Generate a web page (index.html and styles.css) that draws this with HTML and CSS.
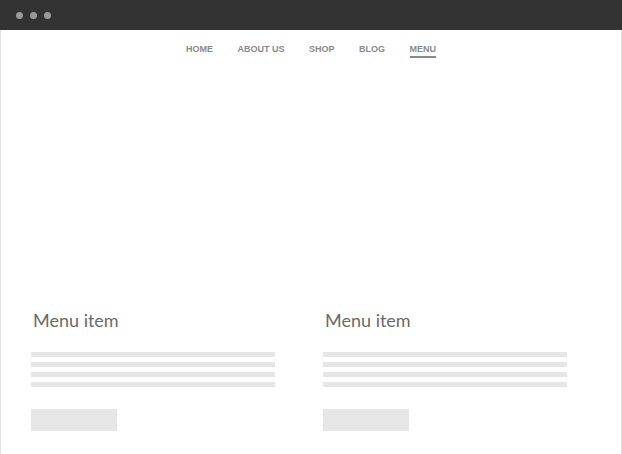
FILE: index.html
```html
<!DOCTYPE html>
<html>
<head>
<meta charset="utf-8">
<link rel="stylesheet" href="styles.css">
</head>
<body>
<div class="window">
  <div class="titlebar">
    <span class="dot"></span><span class="dot"></span><span class="dot"></span>
  </div>
  <div class="page">
    <nav class="nav">
      <a class="nav-link">HOME</a>
      <a class="nav-link">ABOUT US</a>
      <a class="nav-link">SHOP</a>
      <a class="nav-link">BLOG</a>
      <a class="nav-link active">MENU</a>
    </nav>
    <div class="hero"></div>
    <div class="menu">
      <div class="item">
        <h2 class="item-title">Menu item</h2>
        <div class="lines">
          <div class="line"></div><div class="line"></div><div class="line"></div><div class="line"></div>
        </div>
        <div class="button"></div>
      </div>
      <div class="item">
        <h2 class="item-title">Menu item</h2>
        <div class="lines">
          <div class="line"></div><div class="line"></div><div class="line"></div><div class="line"></div>
        </div>
        <div class="button"></div>
      </div>
    </div>
  </div>
</div>
</body>
</html>
```
FILE: styles.css
```css
* { box-sizing: border-box; }
html, body { margin: 0; padding: 0; background: #fff; }
.window { width: 622px; height: 454px; display: flex; flex-direction: column; overflow: hidden; }
.titlebar { height: 30px; background: #333333; display: flex; align-items: center; padding-left: 16px; gap: 7px; flex: none; }
.dot { width: 7px; height: 7px; border-radius: 50%; background: #9a9a9a; }
.page { flex: 1; border-left: 1px solid #e2e2e2; border-right: 1px solid #e2e2e2; display: flex; flex-direction: column; }
.nav { display: flex; justify-content: center; gap: 24.5px; padding-top: 14px; font-family: "Liberation Sans", Arial, sans-serif; font-weight: bold; font-size: 9px; line-height: 11px; }
.nav-link { color: #8a8a8a; text-decoration: none; }
.nav-link.active { border-bottom: 2px solid #8a8a8a; padding-bottom: 1px; }
.hero { height: 250px; }
.menu { display: grid; grid-template-columns: 292px 292px; padding-left: 30px; }
.item-title { margin: 0 0 0 2px; font-family: Lato, sans-serif; font-weight: 400; font-size: 18px; line-height: 24px; color: #6a6a6a; }
.lines { display: flex; flex-direction: column; gap: 5px; margin-top: 20px; }
.line { width: 244px; height: 5px; background: #e6e6e6; }
.button { width: 86px; height: 22px; background: #e6e6e6; margin-top: 22px; }
```
